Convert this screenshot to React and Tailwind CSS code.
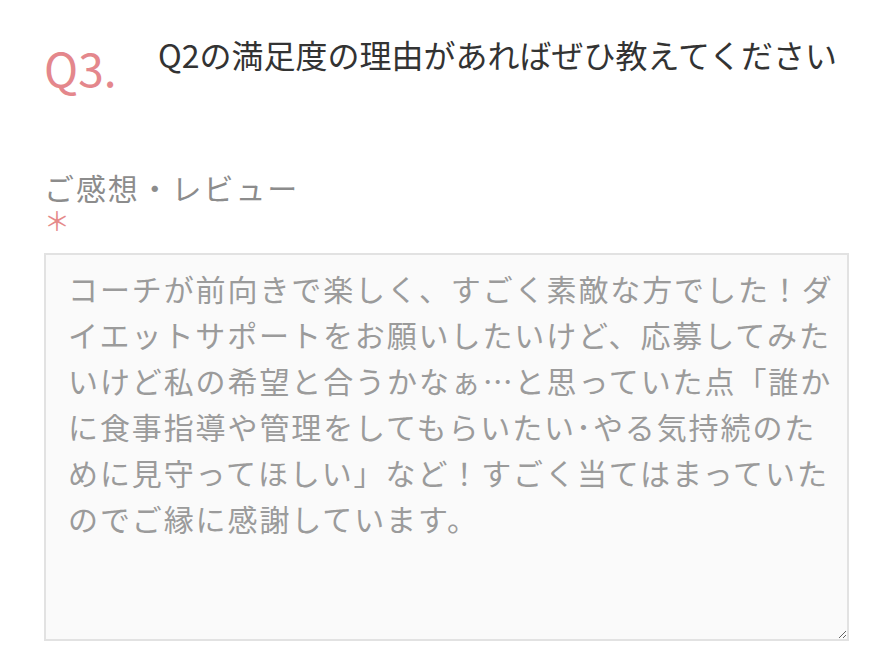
import React from 'react';

const jp = '"Noto Sans CJK JP", "Noto Sans", sans-serif';

const review =
  'コーチが前向きで楽しく、すごく素敵な方でした！ダイエットサポートをお願いしたいけど、応募してみたいけど私の希望と合うかなぁ…と思っていた点「誰かに食事指導や管理をしてもらいたい･やる気持続のために見守ってほしい」など！すごく当てはまっていたのでご縁に感謝しています。';

const App = () => {
  return (
    <div className="min-h-screen bg-white pl-[44px] pr-[38px]" style={{ fontFamily: jp }}>
      {/* Question heading */}
      <div className="flex items-start pt-[34px]">
        <span className="w-[114px] pt-[3px] text-[46px] leading-[60px] font-normal text-[#e4878c]">
          Q3.
        </span>
        <h2 className="text-[32px] leading-[40px] text-[#333333]">
          Q2の満足度の理由があればぜひ教えてください
        </h2>
      </div>

      {/* Review field */}
      <div className="mt-[72px]">
        <label className="block text-[30px] leading-[36px] tracking-[1.9px] text-[#8c8c8c]">
          ご感想・レビュー
        </label>
        <span className="block text-[26px] leading-[30px] text-[#e58a8a]">＊</span>
        <textarea
          className="mt-[18px] block h-[388px] w-[805px] border-2 border-[#e2e2e2] bg-[#fafafa] pl-[22px] pr-[12px] py-[10px] text-[30px] leading-[46px] tracking-[1.9px] text-[#333333] placeholder:text-[#9b9b9b] outline-none"
          style={{ fontFamily: jp }}
          placeholder={review}
        />
      </div>
    </div>
  );
};

export default App;
